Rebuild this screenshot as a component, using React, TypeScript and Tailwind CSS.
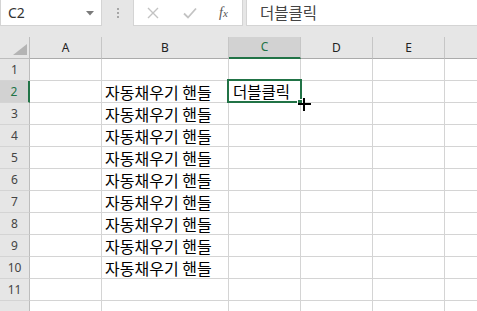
import React from "react";

const LATIN = { fontFamily: '"Noto Sans", "Open Sans", sans-serif' };
const KR = { fontFamily: '"Noto Sans CJK KR", "Noto Sans", sans-serif' };

const cols = [
  { l: "A", w: "w-[72px]" },
  { l: "B", w: "w-[127px]" },
  { l: "C", w: "w-[72px]" },
  { l: "D", w: "w-[72px]" },
  { l: "E", w: "w-[72px]" },
  { l: "", w: "w-[72px]" },
];

const rows = Array.from({ length: 12 }, (_, i) => i + 1);

function cellText(r: number, c: string) {
  if (c === "B" && r >= 2 && r <= 10) return "자동채우기 핸들";
  return "";
}

export default function App() {
  return (
    <div className="w-[477px] h-[311px] overflow-hidden bg-white relative">
      {/* Top bar */}
      <div className="h-[37px] bg-[#e6e6e6] flex items-start">
        <div className="w-[102px] h-[26px] bg-white border border-[#d4d4d4] border-t-0 flex items-center justify-between pl-[7px] pr-[7px]">
          <span className="text-[14px] text-[#333] leading-none" style={LATIN}>
            C2
          </span>
          <svg width="8" height="5" viewBox="0 0 8 5" className="mt-[1px]">
            <path d="M0 0 L8 0 L4 4.5 Z" fill="#7a7a7a" />
          </svg>
        </div>
        <div className="w-[31px] h-[26px] flex flex-col items-center justify-center gap-[2px]">
          <div className="w-[2px] h-[2px] bg-[#a6a6a6]" />
          <div className="w-[2px] h-[2px] bg-[#a6a6a6]" />
          <div className="w-[2px] h-[2px] bg-[#a6a6a6]" />
        </div>
        <div className="w-[110px] h-[26px] bg-white border border-[#d4d4d4] border-t-0 flex items-center pl-[13px]">
          <svg width="12" height="12" viewBox="0 0 12 12">
            <path d="M1 1 L11 11 M11 1 L1 11" stroke="#c3c3c3" strokeWidth="1.4" />
          </svg>
          <svg width="14" height="12" viewBox="0 0 14 12" className="ml-[24px]">
            <path d="M1 6.5 L5 10.5 L13 1.5" stroke="#c3c3c3" strokeWidth="1.8" fill="none" />
          </svg>
          <span
            className="ml-[22px] text-[14px] italic text-[#555] leading-none"
            style={{ fontFamily: '"Liberation Serif", serif' }}
          >
            f<span className="text-[11px]">x</span>
          </span>
        </div>
        <div className="w-[3px]" />
        <div className="flex-1 h-[26px] bg-white border border-[#d4d4d4] border-t-0 border-r-0 flex items-center pl-[13px]">
          <span className="text-[15.5px] text-[#444] leading-none" style={KR}>
            더블클릭
          </span>
        </div>
      </div>

      {/* Column header row */}
      <div className="flex h-[22px]">
        <div className="w-[30px] shrink-0 h-full bg-[#e6e6e6] border-r border-b border-[#bdbdbd] relative">
          <svg width="30" height="22" viewBox="0 0 30 22" className="absolute left-0 top-0">
            <path d="M27 7 L27 18 L13 18 Z" fill="#b4b4b4" />
          </svg>
        </div>
        {cols.map((c, i) => {
          const sel = c.l === "C";
          return (
            <div
              key={i}
              className={`${c.w} shrink-0 h-full flex items-center justify-center border-r border-[#c6c6c6] ${
                sel
                  ? "bg-[#d2d2d2] border-b-2 border-b-[#217346] text-[#217346]"
                  : "bg-[#e6e6e6] border-b border-b-[#ababab] text-[#222]"
              }`}
            >
              <span className="text-[12px] leading-none" style={LATIN}>
                {c.l}
              </span>
            </div>
          );
        })}
      </div>

      {/* Rows */}
      {rows.map((r) => {
        const sel = r === 2;
        return (
          <div key={r} className="flex h-[22px]">
            <div
              className={`w-[30px] shrink-0 h-full flex items-center justify-center border-b border-b-[#d4d4d4] ${
                sel
                  ? "bg-[#d2d2d2] border-r-2 border-r-[#217346] text-[#217346]"
                  : "bg-[#e6e6e6] border-r border-r-[#bdbdbd] text-[#444]"
              }`}
            >
              <span className="text-[12px] leading-none" style={LATIN}>
                {r <= 11 ? r : ""}
              </span>
            </div>
            {cols.map((c, i) => (
              <div
                key={i}
                className={`${c.w} shrink-0 h-full border-r border-b border-[#d4d4d4] flex items-center pl-[3px] overflow-visible whitespace-nowrap`}
              >
                {r === 2 && c.l === "C" ? (
                  <span className="text-[15.5px] leading-none text-black pl-[1px]" style={KR}>
                    더블클릭
                  </span>
                ) : (
                  <span className="text-[16px] leading-none text-black" style={KR}>
                    {cellText(r, c.l)}
                  </span>
                )}
              </div>
            ))}
          </div>
        );
      })}

      {/* Selection box */}
      <div className="absolute left-[227px] top-[79px] w-[75px] h-[24px] border-2 border-[#217346]" />
      {/* Fill handle */}
      <div className="absolute left-[297px] top-[99px] w-[6px] h-[6px] bg-[#217346] border border-white" />
      {/* Cursor */}
      <div className="absolute left-[298px] top-[103px] w-[13px] h-[2px] bg-black" />
      <div className="absolute left-[303px] top-[98px] w-[2px] h-[13px] bg-black" />
    </div>
  );
}
